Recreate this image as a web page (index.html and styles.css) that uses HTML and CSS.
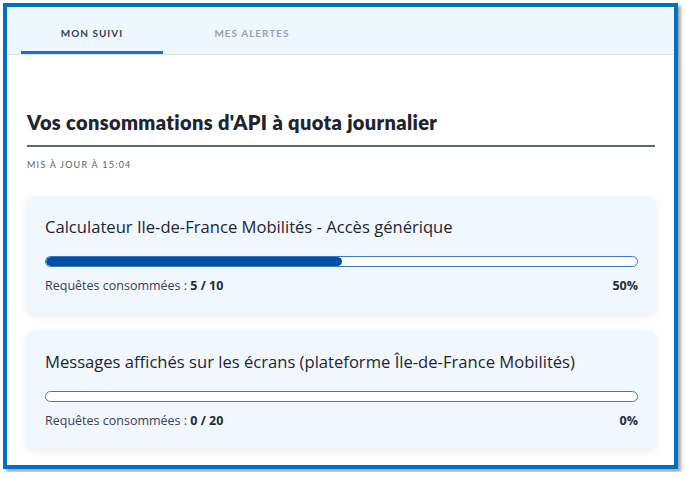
FILE: index.html
```html
<!DOCTYPE html>
<html lang="fr">
<head>
  <meta charset="UTF-8" />
  <meta name="viewport" content="width=device-width, initial-scale=1.0"/>
  <title>Mon suivi</title>
  <link rel="stylesheet" href="styles.css">
</head>
<body>
  <div class="frame">

    <nav class="tabs">
      <div class="tab active">MON SUIVI</div>
      <div class="tab">MES ALERTES</div>
    </nav>

    <main class="content">
      <h1>Vos consommations d'API à quota journalier</h1>
      <div class="updated">MIS À JOUR À 15:04</div>

      <section class="card">
        <h2>Calculateur Ile-de-France Mobilités - Accès générique</h2>
        <div class="bar"><div class="fill" style="width: 50%"></div></div>
        <div class="stats">
          <span>Requêtes consommées : <strong>5 / 10</strong></span>
          <strong>50%</strong>
        </div>
      </section>

      <section class="card">
        <h2>Messages affichés sur les écrans (plateforme Île-de-France Mobilités)</h2>
        <div class="bar"><div class="fill" style="width: 0%"></div></div>
        <div class="stats">
          <span>Requêtes consommées : <strong>0 / 20</strong></span>
          <strong>0%</strong>
        </div>
      </section>
    </main>

  </div>
</body>
</html>
```

FILE: styles.css
```css
    :root {
      --blue: #0070c4;
      --blue-dark: #0050a8;
      --tab-bg: #eef6fe;
      --card-bg: #f0f7fe;
      --text: #222a36;
    }

    * {
      box-sizing: border-box;
    }

    body {
      margin: 0;
      font-family: Lato, 'Open Sans', sans-serif;
      background: #fff;
      color: var(--text);
      padding: 3px;
    }

    .frame {
      width: 675px;
      height: 466px;
      border: 4px solid var(--blue);
      background: #fff;
      box-shadow: 3px 3px 3px rgba(0,0,0,0.35);
      overflow: hidden;
    }

    .tabs {
      display: flex;
      height: 48px;
      padding-left: 14px;
      background: var(--tab-bg);
      border-bottom: 1px solid #dde3ea;
    }

    .tab {
      width: 142px;
      display: flex;
      align-items: center;
      justify-content: center;
      padding-top: 8px;
      font-size: 10px;
      font-weight: 700;
      letter-spacing: 1px;
      color: #9aa3ae;
      border-bottom: 3px solid transparent;
      margin-right: 18px;
    }

    .tab.active {
      color: #39414d;
      border-bottom-color: #1a6fd0;
    }

    .content {
      padding: 0 19px 0 20px;
    }

    h1 {
      margin: 55px 0 0;
      padding-bottom: 11px;
      font-size: 20px;
      font-weight: 800;
      letter-spacing: 0.35px;
      color: #1e2430;
      border-bottom: 2px solid #5c6778;
    }

    .updated {
      margin-top: 12px;
      font-size: 9px;
      letter-spacing: 1.25px;
      color: #5a626d;
    }

    .card {
      background: var(--card-bg);
      border-radius: 6px;
      box-shadow: 0 3px 8px rgba(0,0,0,0.08);
      padding: 20px 17px 0 18px;
      margin-top: 26px;
      height: 117px;
      font-family: 'Open Sans', sans-serif;
    }

    .card + .card {
      margin-top: 18px;
    }

    h2 {
      margin: 0;
      font-size: 16.6px;
      line-height: 22px;
      font-weight: 400;
      color: #1f2530;
    }

    .bar {
      margin-top: 18px;
      height: 11px;
      border: 1px solid #3a78c4;
      border-radius: 6px;
      background: #fff;
      overflow: hidden;
    }

    .fill {
      height: 100%;
      background: var(--blue-dark);
      border-radius: 6px;
    }

    .stats {
      display: flex;
      justify-content: space-between;
      margin-top: 10px;
      font-size: 12.5px;
      line-height: 17px;
      color: #3a414b;
    }

    .stats strong {
      font-weight: 700;
      color: #252b36;
    }
```
